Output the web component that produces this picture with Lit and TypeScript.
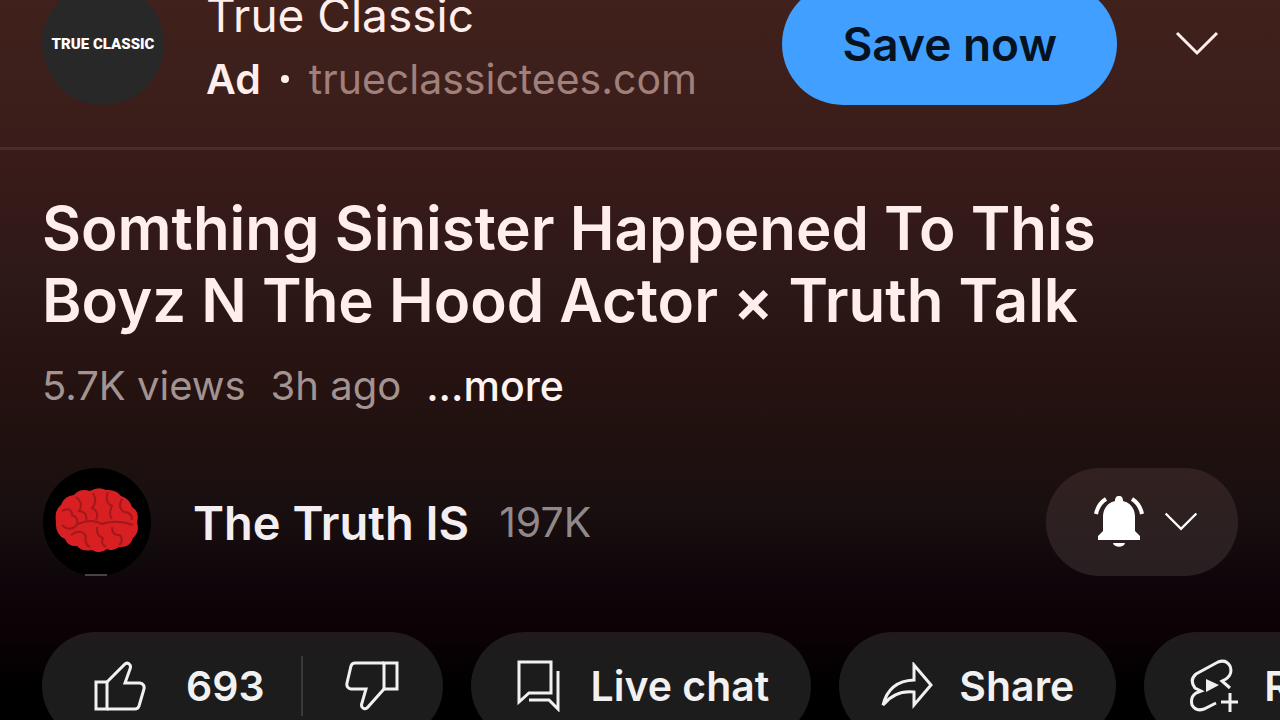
import { LitElement, html, css, svg } from "lit";
import { customElement } from "lit/decorators.js";

const chevron = svg`<path d="M2 2 L22 22 L42 2" />`;

@customElement("app-root")
export class AppRoot extends LitElement {
  static styles = css`
    :host {
      display: block;
      height: 100vh;
      overflow: hidden;
      font-family: Inter, "Liberation Sans", sans-serif;
      font-feature-settings: "calt" 0;
      color: #ffeeec;
      background: linear-gradient(
        #40211c 0,
        #3a1d1a 140px,
        #351a18 200px,
        #2d1818 290px,
        #271312 360px,
        #20110f 430px,
        #190f10 510px,
        #0e060a 580px,
        #0c0206 630px,
        #000 690px
      );
    }
    button,
    a {
      font: inherit;
      color: inherit;
      text-decoration: none;
    }
    button {
      display: flex;
      align-items: center;
      margin: 0;
      padding: 0;
      border: 0;
      background: none;
      white-space: nowrap;
    }
    svg {
      display: block;
      flex: none;
    }
    .line {
      fill: none;
      stroke: currentColor;
      stroke-width: 3;
    }
    .ad {
      display: flex;
      align-items: flex-start;
      margin-top: -17px;
      padding: 0 61px 36px 42px;
      border-bottom: 3px solid #4b2c29;
    }
    .brand {
      display: flex;
      flex: none;
      align-items: center;
      justify-content: center;
      width: 122px;
      height: 122px;
      margin-right: 42px;
      border-radius: 50%;
      background: #282828;
      color: #fff;
      font: 900 15px Roboto, sans-serif;
    }
    .ad-text {
      flex: 1;
    }
    .advertiser {
      font-size: 46px;
      line-height: 64px;
    }
    .source {
      display: flex;
      align-items: center;
      gap: 20px;
      font-size: 41px;
      line-height: 64px;
    }
    .source strong {
      font-weight: 600;
    }
    .dot {
      width: 8px;
      height: 8px;
      border-radius: 50%;
      background: currentColor;
    }
    .source a {
      color: #a1807b;
    }
    .cta {
      justify-content: center;
      height: 122px;
      padding: 0 60px;
      margin-right: 58px;
      border-radius: 61px;
      background: #409fff;
      color: #06121f;
      font-size: 46px;
      font-weight: 600;
    }
    .expand {
      height: 122px;
    }
    .info {
      padding: 42px 42px 56px;
    }
    h1 {
      margin: 0;
      font-size: 60px;
      font-weight: 600;
      line-height: 72px;
    }
    .meta {
      display: flex;
      gap: 25px;
      margin-top: 22px;
      font-size: 40px;
      line-height: 56px;
      color: #a39391;
    }
    .meta button {
      color: #fff3f1;
      font-size: 41px;
      font-weight: 500;
    }
    .channel {
      display: flex;
      align-items: center;
      margin-top: 54px;
    }
    .channel a {
      display: flex;
      align-items: center;
      flex: 1;
    }
    .name {
      margin: 0 30px 0 41px;
      font-size: 47px;
      font-weight: 600;
      color: #f5eef1;
    }
    .subs {
      font-size: 41px;
      color: #918889;
    }
    .bell {
      justify-content: center;
      gap: 20px;
      width: 192px;
      height: 108px;
      padding-left: 8px;
      border-radius: 54px;
      background: linear-gradient(#32211f, #281f22);
      color: #fff;
    }
    .actions {
      display: flex;
      gap: 28px;
      padding-left: 42px;
    }
    .pill {
      display: flex;
      flex: none;
      align-items: center;
      height: 108px;
      border-radius: 54px;
      background: linear-gradient(#211a1c, #1c1c1c 32px);
      color: #f1f1f1;
      font-size: 41px;
      font-weight: 600;
    }
    .action {
      gap: 26px;
      padding: 0 42px;
    }
    .like {
      gap: 40px;
      padding: 0 36px 0 50px;
      height: 60px;
      border-right: 2px solid #3a3a3a;
    }
    .dislike {
      height: 60px;
      padding: 0 44px 0 42px;
    }
  `;

  render() {
    return html`
      <section class="ad">
        <div class="brand">TRUE CLASSIC</div>
        <div class="ad-text">
          <div class="advertiser">True Classic</div>
          <div class="source">
            <strong>Ad</strong><span class="dot"></span><a href="#">trueclassictees.com</a>
          </div>
        </div>
        <button class="cta">Save now</button>
        <button class="expand" aria-label="Expand">
          <svg class="line" width="44" height="26" viewBox="0 0 44 26">${chevron}</svg>
        </button>
      </section>

      <section class="info">
        <h1>Somthing Sinister Happened To This<br />Boyz N The Hood Actor × Truth Talk</h1>
        <div class="meta">
          <span>5.7K views</span><span>3h ago</span><button>...more</button>
        </div>
        <div class="channel">
          <a href="#">
            <svg width="110" height="108" viewBox="0 0 110 108">
              <circle cx="55" cy="54" r="54" fill="#000" />
              <path
                fill="#d81f22"
                d="M14 54 Q12 42 19 37 Q22 28 32 27 Q38 20 48 23 Q56 18 64 22 Q74 21 79 28 Q88 31 90 39 Q98 44 95 54 Q98 64 91 70 Q88 80 77 79 Q70 84 65 81 Q58 87 50 82 Q40 84 35 78 Q26 79 23 71 Q13 67 14 54Z"
              />
              <path
                fill="none"
                stroke="#a3181b"
                stroke-width="2"
                d="M20 43 Q29 38 30 47 Q38 50 34 58 Q27 64 20 57 M34 29 Q42 35 37 43 Q46 44 44 53 M51 25 Q56 34 50 40 Q58 44 54 52 M66 24 Q62 34 70 38 Q66 46 70 51 M80 31 Q75 39 82 44 Q90 44 90 52 M36 56 Q50 50 60 56 Q74 51 91 57 M29 67 Q39 60 44 68 Q42 76 48 79 M55 59 Q54 68 61 70 Q58 76 64 79 M70 59 Q70 68 78 67 Q82 74 77 77"
              />
              <path stroke="#4b4143" stroke-width="2" d="M43 107H65" />
            </svg>
            <span class="name">The Truth IS</span>
            <span class="subs">197K</span>
          </a>
          <button class="bell" aria-label="Notifications">
            <svg width="50" height="54" viewBox="0 0 50 54">
              <path
                fill="currentColor"
                d="M25 1 C28 1 29 3 29 6 C37 8 41 14 41 22 V36 L46 41 V45 H4 V41 L9 36 V22 C9 14 13 8 21 6 C21 3 22 1 25 1Z M19 48 H31 C30 53 20 53 19 48Z"
              />
              <path
                fill="none"
                stroke="currentColor"
                stroke-width="4"
                d="M12 4 Q4 9 2 19 M38 4 Q46 9 48 19"
              />
            </svg>
            <svg class="line" width="34" height="20" viewBox="0 0 44 26">${chevron}</svg>
          </button>
        </div>
      </section>

      <nav class="actions">
        <div class="pill">
          <button class="like">
            <svg class="line" width="54" height="52" viewBox="0 0 54 52">
              <path d="M4 22 H15 V49 H4Z" />
              <path
                d="M15 22 L33 4 Q36 2 38 5 Q39 7 38 9 L33 23 H48 Q53 24 52 29 L47 46 Q46 49 43 49 H15"
              />
            </svg>
            693
          </button>
          <button class="dislike" aria-label="Dislike">
            <svg class="line" width="54" height="52" viewBox="0 0 54 52">
              <path d="M39 3 H52 V29 H39Z" />
              <path
                d="M39 29 L22 48 Q19 50 17 47 Q16 45 17 43 L21 29 H6 Q1 28 2 23 L6 6 Q7 3 10 3 H39"
              />
            </svg>
          </button>
        </div>
        <button class="pill action">
          <svg class="line" width="52" height="52" viewBox="0 0 52 52">
            <path d="M6 2 H38 V33 H16 L6 42Z" />
            <path d="M45 11 V49 L36 40 H16" />
          </svg>
          Live chat
        </button>
        <button class="pill action">
          <svg class="line" width="52" height="48" viewBox="0 0 52 48">
            <path d="M33 3 L50 23 L33 43 V30 Q14 28 2 43 Q8 19 33 18Z" />
          </svg>
          Share
        </button>
        <button class="pill action">
          <svg width="52" height="54" viewBox="-4 0 52 54">
            <path
              class="line"
              d="M26 44 L14 50 Q6 53 2 46 Q0 38 6 34 L11 32 L5 29 Q-1 21 6 15 L28 3 Q36 0 40 7 Q43 15 36 20 L32 22 L40 29"
            />
            <path fill="currentColor" d="M16 20 L29 26 L16 33Z" />
            <path class="line" d="M40 34 V53 M31 43 H48" />
          </svg>
          Remix
        </button>
      </nav>
    `;
  }
}
